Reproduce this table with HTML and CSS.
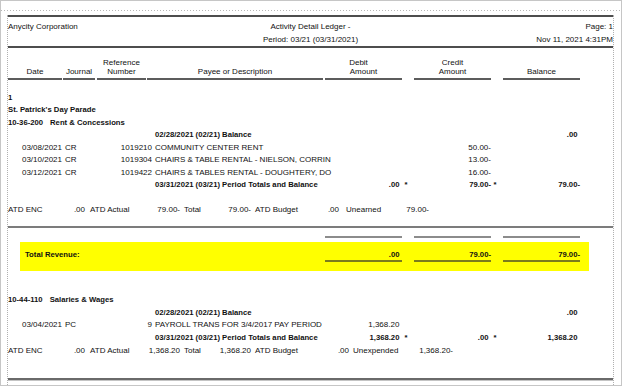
FILE: index.html
```html
<!DOCTYPE html>
<html lang="en">
<head>
  <meta charset="UTF-8">
  <title>Activity Detail Ledger</title>
  <link rel="stylesheet" href="styles.css">
</head>
<body>
  <div class="window">
    <div class="sheet">
      <header class="report-head">
        <div class="co">Anycity Corporation</div>
        <div class="title">Activity Detail Ledger -</div>
        <div class="page-no">Page: 1</div>
        <div class="period">Period: 03/21 (03/31/2021)</div>
        <div class="printed">Nov 11, 2021 4:31PM</div>
      </header>

      <div class="col-heads">
        <div class="h h-date">Date</div>
        <div class="h h-jrnl">Journal</div>
        <div class="h h-ref">Reference<br>Number</div>
        <div class="h h-desc">Payee or Description</div>
        <div class="h h-amt"><span class="h-debit">Debit</span><br>Amount</div>
        <div class="h h-amt">Credit<br>Amount</div>
        <div class="h h-amt h-last">Balance</div>
      </div>

      <section class="fund">
        <div class="group">1</div>
        <div class="group">St. Patrick's Day Parade</div>
        <div class="group"><span class="acct">10-36-200</span>Rent &amp; Concessions</div>

        <div class="row strong">
          <span class="c-desc">02/28/2021 (02/21) Balance</span>
          <span class="c-amt c-bal">.00</span>
        </div>
        <div class="row">
          <span class="c-date">03/08/2021</span><span class="c-jrnl">CR</span><span class="c-ref">1019210</span>
          <span class="c-desc">COMMUNITY CENTER RENT</span>
          <span class="c-amt c-credit">50.00<i class="neg">-</i></span>
        </div>
        <div class="row">
          <span class="c-date">03/10/2021</span><span class="c-jrnl">CR</span><span class="c-ref">1019304</span>
          <span class="c-desc">CHAIRS &amp; TABLE RENTAL - NIELSON, CORRIN</span>
          <span class="c-amt c-credit">13.00<i class="neg">-</i></span>
        </div>
        <div class="row">
          <span class="c-date">03/12/2021</span><span class="c-jrnl">CR</span><span class="c-ref">1019422</span>
          <span class="c-desc">CHAIRS &amp; TABLES RENTAL - DOUGHTERY, DO</span>
          <span class="c-amt c-credit">16.00<i class="neg">-</i></span>
        </div>
        <div class="row strong">
          <span class="c-desc">03/31/2021 (03/21) Period Totals and Balance</span>
          <span class="c-amt c-debit">.00</span><span class="c-star s1">*</span>
          <span class="c-amt c-credit">79.00<i class="neg">-</i></span><span class="c-star s2">*</span>
          <span class="c-amt c-bal">79.00<i class="neg">-</i></span>
        </div>

        <div class="atd atd-rev">
          <span>ATD ENC</span><span class="v">.00</span>
          <span class="k">ATD Actual</span><span class="v">79.00-</span>
          <span class="k">Total</span><span class="v">79.00-</span>
          <span class="k">ATD Budget</span><span class="v">.00</span>
          <span class="k k-wide">Unearned</span><span class="v">79.00-</span>
        </div>
      </section>

      <div class="split"></div>

      <div class="total-rules">
        <span></span><span class="r"></span><span></span><span class="r"></span><span></span><span class="r"></span>
      </div>
      <div class="total-box">
        <span class="t-label">Total Revenue:</span>
        <span class="t-amt">.00</span><span></span>
        <span class="t-amt">79.00<i class="neg">-</i></span><span></span>
        <span class="t-amt">79.00<i class="neg">-</i></span>
      </div>

      <section class="fund fund-exp">
        <div class="group"><span class="acct">10-44-110</span>Salaries &amp; Wages</div>
        <div class="row strong">
          <span class="c-desc">02/28/2021 (02/21) Balance</span>
          <span class="c-amt c-bal">.00</span>
        </div>
        <div class="row">
          <span class="c-date">03/04/2021</span><span class="c-jrnl">PC</span><span class="c-ref">9</span>
          <span class="c-desc">PAYROLL TRANS FOR 3/4/2017 PAY PERIOD</span>
          <span class="c-amt c-debit">1,368.20</span>
        </div>
        <div class="row strong">
          <span class="c-desc">03/31/2021 (03/21) Period Totals and Balance</span>
          <span class="c-amt c-debit">1,368.20</span><span class="c-star s1">*</span>
          <span class="c-amt c-credit">.00</span><span class="c-star s2">*</span>
          <span class="c-amt c-bal">1,368.20</span>
        </div>

        <div class="atd atd-exp">
          <span>ATD ENC</span><span class="v">.00</span>
          <span class="k">ATD Actual</span><span class="v">1,368.20</span>
          <span class="k">Total</span><span class="v">1,368.20</span>
          <span class="k">ATD Budget</span><span class="v">.00</span>
          <span class="k">Unexpended</span><span class="v">1,368.20-</span>
        </div>
      </section>

      <div class="page-end"></div>
    </div>
  </div>
</body>
</html>
```

FILE: styles.css
```css
html, body { margin: 0; padding: 0; background: #fff; }
body { font-family: "Liberation Sans", Arial, sans-serif; font-size: 8px; color: #111; }

/* preview window with the page margin guides */
.window {
  box-sizing: border-box; width: 622px; height: 386px; overflow: hidden;
  border: 1px solid #c6c6c6;
  background: repeating-linear-gradient(90deg, #b8b8b8 0 1px, transparent 1px 3px) 0 9px / 100% 1px no-repeat;
}
.sheet {
  box-sizing: border-box; width: 607px; height: 100%; margin-left: 6px;
  border-left: 1px dotted #b0b0b0; border-right: 1px dotted #b0b0b0;
}

/* report heading */
.report-head {
  display: grid; grid-template-columns: 1fr auto 1fr; grid-template-rows: 14px 12px;
  margin-top: 14px; padding-top: 3px;
  border-top: 2px solid #4e4e4e; border-bottom: 2px solid #4e4e4e;
  white-space: nowrap;
}
.co { grid-column: 1; grid-row: 1; line-height: 14px; }
.title { grid-column: 2; grid-row: 1; line-height: 14px; text-align: center; }
.period { grid-column: 2; grid-row: 2; line-height: 12px; text-align: center; }
.page-no { grid-column: 3; grid-row: 1; line-height: 14px; text-align: right; }
.printed { grid-column: 3; grid-row: 2; line-height: 12px; text-align: right; }

/* column headings */
.col-heads { display: flex; align-items: flex-end; padding-top: 10px; }
.h {
  line-height: 9px; padding-bottom: 2px; text-align: center;
  border-bottom: 2px solid #5c5c5c; white-space: nowrap;
}
.h-date { width: 54px; margin-right: 1px; }
.h-jrnl { width: 32px; margin-right: 2px; }
.h-ref { width: 49px; margin-right: 1px; }
.h-desc { width: 176px; margin-right: 2px; }
.h-amt { width: 77px; margin-right: 12px; }
.h-last { margin-right: 0; }
.h-debit { position: relative; left: -5px; }

/* ledger body */
.fund { margin-top: 11.5px; }
.fund-exp { margin-top: 23.4px; }
.group, .row { height: 12.5px; line-height: 12.5px; white-space: nowrap; }
.group { font-weight: bold; font-size: 7.7px; }
.acct { margin-right: 7px; }
.row {
  display: grid;
  grid-template-columns: 55px 42px 47px 173px 77px 12px 77px 12px 77px;
}
.strong { font-weight: bold; font-size: 7.7px; }
.c-date { grid-column: 1; text-align: right; padding-right: 1px; }
.c-jrnl { grid-column: 2; padding-left: 2px; }
.c-ref { grid-column: 3; text-align: right; }
.c-desc { grid-column: 4; padding-left: 3px; }
.c-amt { text-align: right; padding-right: 0.333em; }
.c-debit { grid-column: 5; }
.c-credit { grid-column: 7; }
.c-bal { grid-column: 9; }
.c-star { padding-left: 2.5px; }
.s1 { grid-column: 6; }
.s2 { grid-column: 8; }
.neg { font-style: normal; margin-right: -0.333em; }

/* ATD summary line under each account */
.atd { display: grid; height: 12.5px; line-height: 12.5px; white-space: nowrap; }
.atd-rev { margin-top: 12.5px; grid-template-columns: 42px 35px 55px 40px 30px 41px 49px 39px 61px 29px; }
.atd-exp { margin-top: 0.6px; grid-template-columns: 42px 35px 55px 40px 30px 41px 49px 49px 61px 43px; }
.atd .v { text-align: right; }
.atd .k { padding-left: 5px; }
.atd .k:nth-child(5), .atd .k:nth-child(7) { padding-left: 4px; }
.atd-rev .k-wide { padding-left: 7px; }
.atd-exp .k:nth-child(9) { padding-left: 4px; }

.split { margin-top: 9.5px; border-top: 2px solid #7c7c7c; }

/* revenue totals */
.total-rules {
  display: grid; margin-top: 8px;
  grid-template-columns: 317px 77px 12px 77px 12px 77px;
}
.total-rules .r { border-top: 2px solid #8c8c8c; }
.total-box {
  display: grid; width: 569px; margin: 4px 0 0 12px; padding: 7px 0 9px;
  grid-template-columns: 305px 77px 12px 77px 12px 77px;
  background: #ffff00; font-weight: bold; font-size: 7.7px; line-height: 11px;
}
.t-label { padding-left: 5px; }
.t-amt { text-align: right; padding-right: 0.333em; border-bottom: 2px solid #7c7c1c; }

.page-end { margin-top: 20.5px; border-top: 2px solid #6a6a6a; border-bottom: 1px solid #c4c4c4; }
```
